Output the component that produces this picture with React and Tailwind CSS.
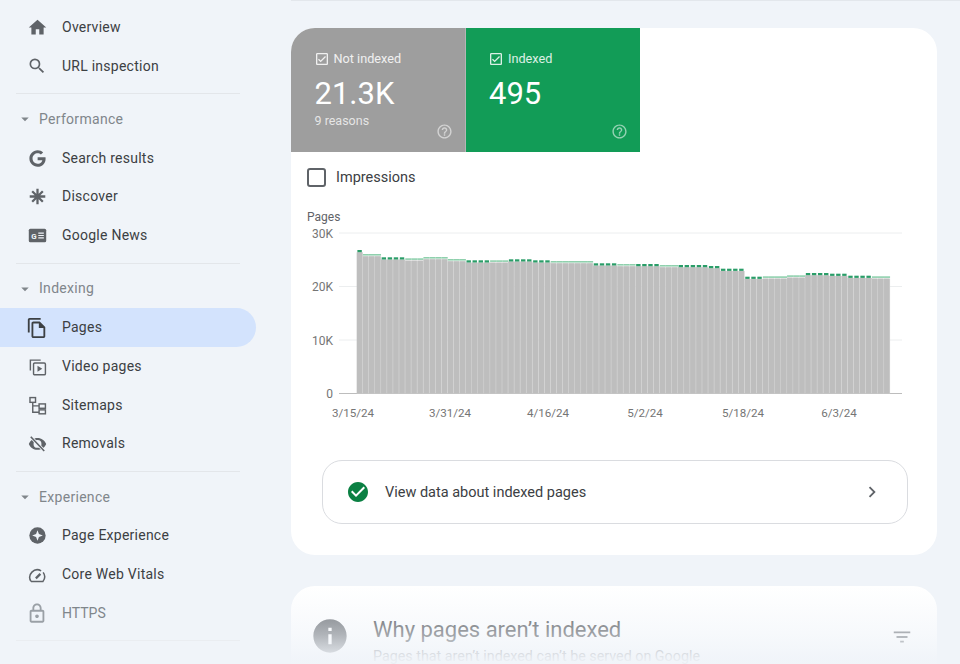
import {
  MdHome,
  MdSearch,
  MdOutlineFileCopy,
  MdOutlineLock,
  MdArrowDropDown,
  MdHelpOutline,
  MdCheckCircle,
  MdChevronRight,
  MdFilterList,
  MdInfo,
  MdOutlineCheckBox,
} from "react-icons/md";
import { FaGoogle } from "react-icons/fa";

function DiscoverIcon({ className }) {
  return (
    <svg viewBox="0 0 24 24" className={className} fill="none" stroke="currentColor" strokeWidth="3.2">
      <path d="M12 1v22M1 12h22M4.5 4.5l15 15M19.5 4.5l-15 15" />
    </svg>
  );
}

function NewsIcon({ className }) {
  return (
    <svg viewBox="0 0 24 24" className={className}>
      <rect x="1" y="3.5" width="22" height="17" rx="2" fill="currentColor" />
      <text x="4" y="16" fontSize="10" fontWeight="700" fontFamily="Roboto, sans-serif" fill="#f0f4f9">G</text>
      <path d="M13 9h7M13 12h7M13 15h7" stroke="#f0f4f9" strokeWidth="1.4" />
    </svg>
  );
}

function VideoPagesIcon({ className }) {
  return (
    <svg viewBox="0 0 24 24" className={className} fill="none" stroke="currentColor" strokeWidth="1.8">
      <path d="M3 17V3.9h13" />
      <rect x="7" y="7.5" width="15" height="15" rx="1.5" />
      <path d="M12 11v7.5l6-3.7z" fill="currentColor" stroke="none" />
    </svg>
  );
}

function SitemapIcon({ className }) {
  return (
    <svg viewBox="0 0 24 24" className={className} fill="none" stroke="currentColor" strokeWidth="1.8">
      <rect x="2.5" y="2" width="7" height="6" />
      <rect x="14" y="10" width="8" height="5.5" />
      <rect x="14" y="17.5" width="8" height="5" />
      <path d="M6 8v12.5h8M6 12.5h8" />
    </svg>
  );
}

function EyeOffIcon({ className }) {
  return (
    <svg viewBox="0 0 24 24" className={className}>
      <path
        fill="currentColor"
        d="M12 5C7 5 3 8 1 12.5 3 17 7 20 12 20s9-3 11-7.5C21 8 17 5 12 5zm0 12.5a5 5 0 1 1 0-10 5 5 0 0 1 0 10z"
      />
      <path d="M3.5 3.5l17 18" stroke="#f0f4f9" strokeWidth="4" />
      <path d="M3.5 3.5l17 18" stroke="currentColor" strokeWidth="2" />
    </svg>
  );
}

function PageExperienceIcon({ className }) {
  return (
    <svg viewBox="0 0 24 24" className={className}>
      <circle cx="12" cy="12" r="11.5" fill="currentColor" />
      <path d="M12 4.5l2 5.5 5.5 2-5.5 2-2 5.5-2-5.5L4.5 12l5.5-2z" fill="#f0f4f9" />
    </svg>
  );
}

function VitalsIcon({ className }) {
  return (
    <svg viewBox="0 0 24 24" className={className} fill="none" stroke="currentColor" strokeWidth="2">
      <path d="M4 20.5a10 10 0 0 1 13.5-14M20.2 8.5A10 10 0 0 1 20 20.5H4" />
      <path d="M10.5 16.5l6-6" strokeWidth="3" />
    </svg>
  );
}

const groups = [
  {
    items: [
      { label: "Overview", icon: <MdHome className="w-[21px] h-[21px]" /> },
      { label: "URL inspection", icon: <MdSearch className="w-[20px] h-[20px]" /> },
    ],
  },
  {
    title: "Performance",
    items: [
      { label: "Search results", icon: <FaGoogle className="w-[17px] h-[17px]" /> },
      { label: "Discover", icon: <DiscoverIcon className="w-[17px] h-[17px]" /> },
      { label: "Google News", icon: <NewsIcon className="w-[19px] h-[19px]" /> },
    ],
  },
  {
    title: "Indexing",
    items: [
      { label: "Pages", active: true, icon: <MdOutlineFileCopy className="w-[22px] h-[22px] text-[#3c4043]" /> },
      { label: "Video pages", icon: <VideoPagesIcon className="w-[19px] h-[19px]" /> },
      { label: "Sitemaps", icon: <SitemapIcon className="w-[19px] h-[19px]" /> },
      { label: "Removals", icon: <EyeOffIcon className="w-[19px] h-[19px]" /> },
    ],
  },
  {
    title: "Experience",
    items: [
      { label: "Page Experience", icon: <PageExperienceIcon className="w-[17px] h-[17px]" /> },
      { label: "Core Web Vitals", icon: <VitalsIcon className="w-[18px] h-[18px]" /> },
      { label: "HTTPS", muted: true, icon: <MdOutlineLock className="w-[23px] h-[23px]" /> },
    ],
  },
];

// [first bar, last bar, green top y, dark cap]
const segments = [
  [0, 0, 250, true],
  [1, 3, 254, false],
  [4, 7, 257.3, true],
  [8, 10, 258.3, false],
  [11, 14, 257, false],
  [15, 17, 259, false],
  [18, 21, 260.3, true],
  [22, 24, 260.3, false],
  [25, 28, 259.3, true],
  [29, 31, 260.3, true],
  [32, 38, 261, false],
  [39, 42, 263.3, true],
  [43, 45, 264, false],
  [46, 49, 264, true],
  [50, 52, 265, false],
  [53, 57, 265, true],
  [58, 59, 266, true],
  [60, 63, 268.7, true],
  [64, 66, 276.7, true],
  [67, 70, 276.3, false],
  [71, 73, 275.3, false],
  [74, 77, 273, true],
  [78, 80, 273.7, true],
  [81, 84, 275.7, true],
  [85, 87, 276.3, false],
];

const bars = segments.flatMap(([from, to, top, dark]) =>
  Array.from({ length: to - from + 1 }, (_, i) => ({ index: from + i, top, dark }))
);

const yTicks = [
  { label: "30K", y: 233 },
  { label: "20K", y: 286.5 },
  { label: "10K", y: 340 },
  { label: "0", y: 393.5 },
];

const dates = [
  { label: "3/15/24", x: 353 },
  { label: "3/31/24", x: 450 },
  { label: "4/16/24", x: 548 },
  { label: "5/2/24", x: 645 },
  { label: "5/18/24", x: 743 },
  { label: "6/3/24", x: 839 },
];

function Chart() {
  return (
    <svg viewBox="291 205 646 240" className="block w-[646px] h-[240px]" fontFamily="Roboto, sans-serif">
      <text x="307" y="220.5" fontSize="12" fill="#5f6368">Pages</text>
      {yTicks.map((tick) => (
        <g key={tick.label}>
          <text x="333" y={tick.y + 4.5} fontSize="12" fill="#757575" textAnchor="end">{tick.label}</text>
          <line
            x1="339"
            x2="902"
            y1={tick.y}
            y2={tick.y}
            stroke={tick.label === "0" ? "#bdbdbd" : "#eceeef"}
          />
        </g>
      ))}
      {bars.map((bar) => {
        const x = 356.8 + bar.index * 6.06;
        return (
          <g key={bar.index}>
            <rect x={x} y={bar.top + 2.3} width="6.06" height={393.5 - bar.top - 2.3} fill="#d6d6d6" />
            <rect x={x} y={bar.top + 2.3} width="5.5" height={393.5 - bar.top - 2.3} fill="#bebebe" />
            <rect
              x={bar.dark ? x + 0.6 : x}
              y={bar.top}
              width={bar.dark ? 4.4 : 6.06}
              height={bar.dark ? 2.2 : 1.6}
              fill={bar.dark ? "#2a9d68" : "#8fd0ad"}
            />
          </g>
        );
      })}
      {dates.map((date) => (
        <text key={date.label} x={date.x} y="416.8" fontSize="11.6" fill="#757575" textAnchor="middle">{date.label}</text>
      ))}
    </svg>
  );
}

function StatusTab({ label, value, note, color }) {
  return (
    <div className={`relative w-[174.5px] h-full pl-[23.5px] pt-[21px] text-white ${color}`}>
      <div className="flex items-center gap-[4px] text-[12.7px] leading-5 text-white/85">
        <MdOutlineCheckBox className="w-[16px] h-[16px] -ml-[1px]" />
        <span>{label}</span>
      </div>
      <div className="mt-[5px] text-[31px] leading-[40px]">{value}</div>
      {note && <div className="-mt-[3px] text-[12.5px] leading-5 text-white/75">{note}</div>}
      <MdHelpOutline className="absolute right-[12px] bottom-[12px] w-[17px] h-[17px] text-white/55" />
    </div>
  );
}

export default function App() {
  return (
    <div className="flex h-[664px] w-[960px] overflow-hidden bg-[#f0f4f9] font-['Roboto',sans-serif]">
      <aside className="w-[256px] shrink-0 pt-[8px]">
        {groups.map((group, index) => (
          <div key={index}>
            {group.title && (
              <div className="flex items-center h-[38.8px] pl-[16px] text-[14px] tracking-[0.3px] text-[#80868b]">
                <MdArrowDropDown className="w-[18px] h-[18px] mr-[5px]" />
                {group.title}
              </div>
            )}
            {group.items.map((item) => (
              <div
                key={item.label}
                className={`flex items-center h-[38.8px] pl-[26px] rounded-r-full text-[14px] font-[450] ${
                  item.active
                    ? "bg-[#d3e3fd] text-[#3c4043] tracking-[0.25px]"
                    : item.muted
                      ? "text-[#80868b]"
                      : "text-[#3c4043] tracking-[0.25px]"
                }`}
              >
                <span className={`flex items-center justify-center w-[22px] mr-[14px] ${item.muted ? "text-[#9aa0a6]" : "text-[#5f6368]"}`}>
                  {item.icon}
                </span>
                {item.label}
              </div>
            ))}
            <div
              className={`mx-[16px] mt-[7.6px] mb-[5.7px] h-px ${
                index === groups.length - 1 ? "bg-[#eaedf1]" : "bg-[#e3e6ea]"
              }`}
            />
          </div>
        ))}
      </aside>

      <main className="flex-1 pl-[35px]">
        <div className="h-[28px] border-t border-[#e3e7ec]" />
        <section className="w-[646px] h-[527px] rounded-3xl overflow-hidden bg-white">
          <div className="flex h-[124px]">
            <StatusTab label="Not indexed" value="21.3K" note="9 reasons" color="bg-[#9e9e9e] border-r border-[#b5b5b5]" />
            <StatusTab label="Indexed" value="495" color="bg-[#129c57]" />
          </div>
          <div className="flex items-center h-[50px] pl-[16px]">
            <div className="w-[19px] h-[19px] rounded-[3px] border-2 border-[#5f6368]" />
            <span className="ml-[10px] pt-[1px] text-[14.5px] text-[#3c4043]">Impressions</span>
          </div>
          <div className="mt-[3px]">
            <Chart />
          </div>
          <div className="flex items-center ml-[31px] mr-[29px] mt-[15px] h-[64px] pl-[23px] pr-[24px] rounded-[20px] border border-[#dadce0]">
            <MdCheckCircle className="w-[24px] h-[24px] text-[#0b8043]" />
            <span className="ml-[15px] pt-[1px] flex-1 text-[14.5px] text-[#3c4043]">View data about indexed pages</span>
            <MdChevronRight className="w-[22px] h-[22px] text-[#5f6368]" />
          </div>
        </section>

        <section className="relative mt-[31px] w-[646px] h-[120px] rounded-3xl overflow-hidden bg-white">
          <div className="flex items-start pt-[28px] pl-[19px] pr-[24px] h-[60px]">
            <MdInfo className="mt-[2px] w-[40px] h-[40px] text-[#5f6368]" />
            <span className="ml-[23px] flex-1 text-[22px] leading-[32px] text-[#3c4043]">Why pages aren’t indexed</span>
            <MdFilterList className="mt-[12px] w-[22px] h-[22px] text-[#5f6368]" />
          </div>
          <div className="mt-[2px] pl-[82px] text-[14.3px] leading-[16px] text-[#5f6368]">Pages that aren’t indexed can’t be served on Google</div>
          <div className="absolute inset-0 bg-gradient-to-b from-[#f0f4f9]/0 via-[#f0f4f9]/55 via-40% to-[#f0f4f9]/95 to-[62%]" />
        </section>
      </main>
    </div>
  );
}
